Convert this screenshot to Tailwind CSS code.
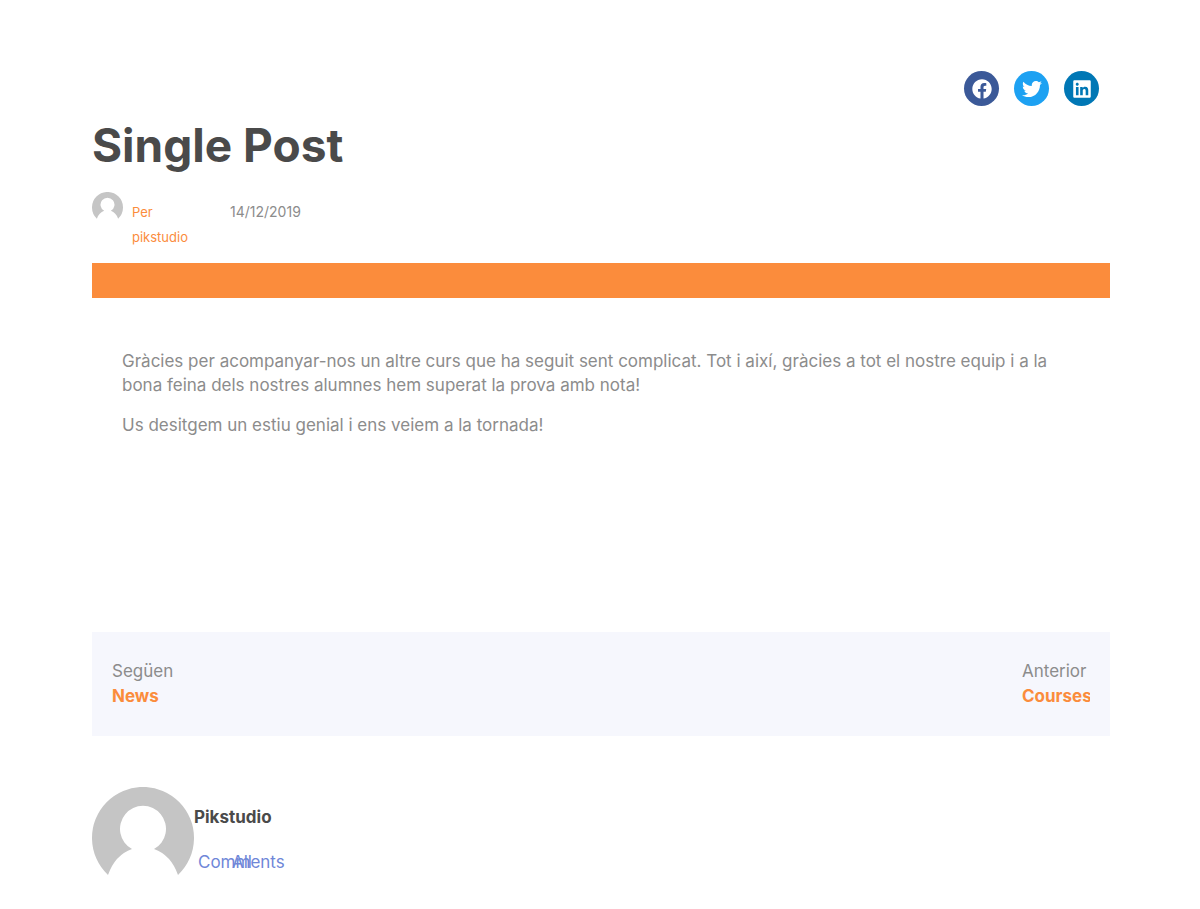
<!DOCTYPE html>
<html lang="ca">
<head>
  <meta charset="UTF-8" />
  <meta name="viewport" content="width=device-width, initial-scale=1.0"/>
  <title>Single Post</title>
  <script src="https://cdn.jsdelivr.net/npm/@tailwindcss/browser@4"></script>
</head>
<body class="bg-white font-['Inter',sans-serif] text-[#8c8c8c]">
  <main class="max-w-[1200px] mx-auto pl-[92px] pr-[90px] pt-[71px] pb-8">
    <!-- Share buttons -->
    <div class="flex justify-end gap-[15px] pr-[11px]">
      <a href="#" aria-label="Facebook" class="flex items-center justify-center w-[35px] h-[35px] rounded-full bg-[#3b5998] text-white">
        <svg class="w-5 h-5" viewBox="0 0 512 512" fill="currentColor"><path d="M504 256C504 119 393 8 256 8S8 119 8 256c0 123.78 90.69 226.38 209.25 245V327.69h-63V256h63v-54.64c0-62.15 37-96.48 93.67-96.48 27.14 0 55.52 4.84 55.52 4.84v61h-31.28c-30.8 0-40.41 19.12-40.41 38.73V256h68.78l-11 71.69h-57.78V501C413.31 482.38 504 379.78 504 256z"/></svg>
      </a>
      <a href="#" aria-label="Twitter" class="flex items-center justify-center w-[35px] h-[35px] rounded-full bg-[#1da1f2] text-white">
        <svg class="w-5 h-5" viewBox="0 0 512 512" fill="currentColor"><path d="M459.37 151.716c.325 4.548.325 9.097.325 13.645 0 138.72-105.583 298.558-298.558 298.558-59.452 0-114.68-17.219-161.137-47.106 8.447.974 16.568 1.299 25.34 1.299 49.055 0 94.213-16.568 130.274-44.832-46.132-.975-84.792-31.188-98.112-72.772 6.498.974 12.995 1.624 19.818 1.624 9.421 0 18.843-1.3 27.614-3.573-48.081-9.747-84.143-51.98-84.143-102.985v-1.299c13.969 7.797 30.214 12.67 47.431 13.319-28.264-18.843-46.781-51.005-46.781-87.391 0-19.492 5.197-37.36 14.294-52.954 51.655 63.675 129.3 105.258 216.365 109.807-1.624-7.797-2.599-15.918-2.599-24.04 0-57.828 46.782-104.934 104.934-104.934 30.213 0 57.502 12.67 76.67 33.137 23.715-4.548 46.456-13.32 66.599-25.34-7.798 24.366-24.366 44.833-46.132 57.827 21.117-2.273 41.584-8.122 60.426-16.243-14.292 20.791-32.161 39.308-52.628 54.253z"/></svg>
      </a>
      <a href="#" aria-label="LinkedIn" class="flex items-center justify-center w-[35px] h-[35px] rounded-full bg-[#0077b5] text-white">
        <svg class="w-5 h-5" viewBox="0 0 448 512" fill="currentColor"><path d="M416 32H31.9C14.3 32 0 46.5 0 64.3v383.4C0 465.5 14.3 480 31.9 480H416c17.6 0 32-14.5 32-32.3V64.3c0-17.8-14.4-32.3-32-32.3zM135.4 416H69V202.2h66.5V416zm-33.2-243c-21.3 0-38.5-17.3-38.5-38.5S80.9 96 102.2 96c21.2 0 38.5 17.3 38.5 38.5 0 21.3-17.2 38.5-38.5 38.5zm282.1 243h-66.4V312c0-24.8-.5-56.7-34.5-56.7-34.6 0-39.9 27-39.9 54.9V416h-66.4V202.2h63.7v29.2h.9c8.9-16.8 30.6-34.5 62.9-34.5 67.2 0 79.7 44.3 79.7 101.9V416z"/></svg>
      </a>
    </div>

    <h1 class="mt-3 text-[46px] leading-[54px] font-bold text-[#4a4a4a]">Single Post</h1>

    <!-- Author and date -->
    <div class="flex mt-5 h-[71px]">
      <svg class="w-[31px] h-[31px] shrink-0" viewBox="0 0 102 102">
        <path fill="#c5c5c5" d="M16 88A51 51 0 1 1 86 88Q79 68 62 62A23 23 0 1 0 40 62Q23 68 16 88Z"/>
      </svg>
      <a href="#" class="ml-[9px] mt-2 w-[98px] text-[13px] leading-[25px] text-[#fb8c3c]">Per<br>pikstudio</a>
      <time class="mt-2 text-sm leading-[24px]" datetime="2019-12-14">14/12/2019</time>
    </div>

    <div class="h-[35px] bg-[#fb8c3c]"></div>

    <article class="px-[30px] pt-[51px] min-h-[334px] text-[17px] leading-[24px]">
      <p>Gràcies per acompanyar-nos un altre curs que ha seguit sent complicat. Tot i així, gràcies a tot el nostre equip i a la bona feina dels nostres alumnes hem superat la prova amb nota!</p>
      <p class="mt-4">Us desitgem un estiu genial i ens veiem a la tornada!</p>
    </article>

    <!-- Post navigation -->
    <nav class="flex justify-between h-[104px] px-5 pt-[27px] bg-[#f6f7fd] text-[17px] leading-[25px]">
      <a href="#" class="w-[61px] overflow-hidden">
        <span class="block">Següent</span>
        <span class="block font-bold text-[#fb8c3c]">News</span>
      </a>
      <a href="#" class="w-[68px] overflow-hidden">
        <span class="block">Anterior</span>
        <span class="block font-bold text-[#fb8c3c]">Courses</span>
      </a>
    </nav>

    <!-- Author box -->
    <section class="flex mt-[51px]">
      <svg class="w-[102px] h-[102px] shrink-0" viewBox="0 0 102 102">
        <path fill="#c5c5c5" d="M16 88A51 51 0 1 1 86 88Q79 68 62 62A23 23 0 1 0 40 62Q23 68 16 88Z"/>
      </svg>
      <div class="pt-[18px]">
        <h4 class="text-[17px] leading-[25px] font-bold text-[#4a4a4a]">Pikstudio</h4>
        <div class="grid mt-5 ml-1 text-[17px] leading-[25px] text-[#6f87d8]">
          <a href="#" class="col-start-1 row-start-1">Comments</a>
          <a href="#" class="col-start-1 row-start-1 ml-[34px]">All</a>
        </div>
      </div>
    </section>
  </main>
</body>
</html>
